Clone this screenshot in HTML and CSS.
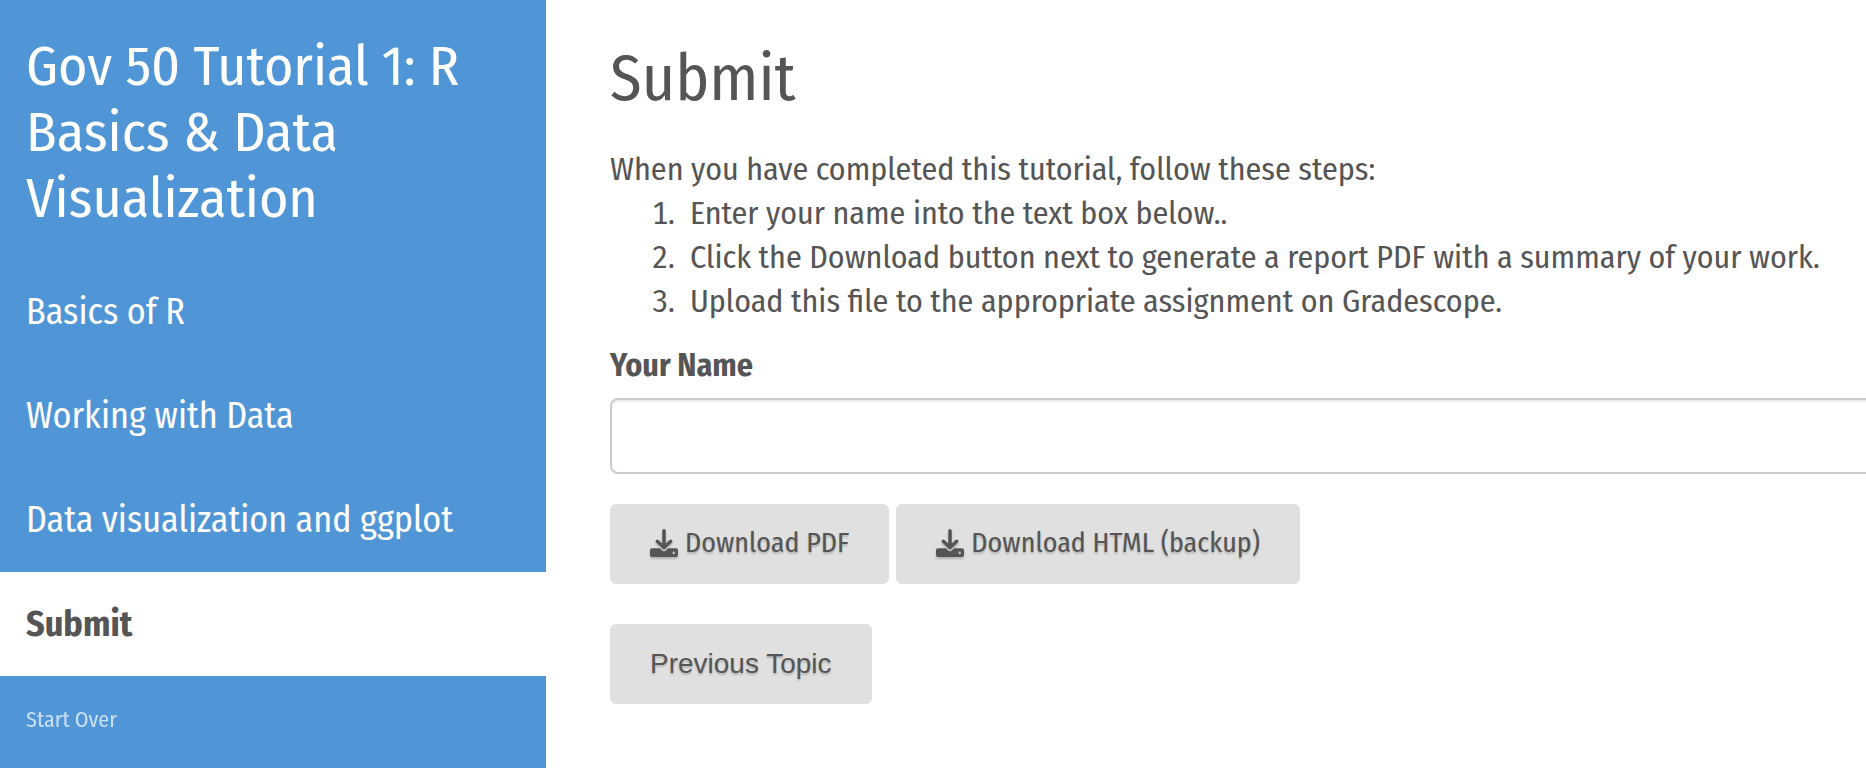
FILE: index.html
```html
<!DOCTYPE html>
<html lang="en">
<head>
<meta charset="utf-8">
<meta name="viewport" content="width=device-width, initial-scale=1">
<title>Gov 50 Tutorial 1: R Basics &amp; Data Visualization</title>
<link rel="stylesheet" href="styles.css">
</head>
<body>
<svg width="0" height="0" class="sprite" aria-hidden="true">
  <symbol id="download" viewBox="0 0 28 28">
    <path d="M14 1.800V17.500M7.300 12.300L14 18.600L20.700 12.300" fill="none" stroke="currentColor" stroke-width="3.500" stroke-linecap="round" stroke-linejoin="round"/>
    <path fill-rule="evenodd" d="M2 19.300H9.800L12.400 21.700Q14 23 15.600 21.700L18.200 19.300H26Q28 19.300 28 21.300V26Q28 28 26 28H2Q0 28 0 26V21.300Q0 19.300 2 19.300ZM23.700 22.600A1.300 1.300 0 1 0 23.700 25.200A1.300 1.300 0 1 0 23.700 22.600Z"/>
  </symbol>
</svg>
<div class="layout">
  <aside class="sidebar">
    <h2 class="sidebar-title">Gov 50 Tutorial 1: R Basics &amp; Data Visualization</h2>
    <nav class="topics">
      <a class="topic" href="#basics">Basics of R</a>
      <a class="topic" href="#data">Working with Data</a>
      <a class="topic" href="#ggplot">Data visualization and ggplot</a>
      <a class="topic current" href="#submit" aria-current="page">Submit</a>
    </nav>
    <a class="restart" href="#restart">Start Over</a>
  </aside>
  <main class="content" id="submit">
    <h1 class="heading">Submit</h1>
    <p class="intro">When you have completed this tutorial, follow these steps:</p>
    <ol class="steps">
      <li>Enter your name into the text box below..</li>
      <li>Click the Download button next to generate a report PDF with a summary of your work.</li>
      <li>Upload this file to the appropriate assignment on Gradescope.</li>
    </ol>
    <label class="label" for="name">Your Name</label>
    <input class="field" id="name" type="text">
    <div class="actions">
      <button class="button download" type="button"><svg class="icon" aria-hidden="true"><use href="#download"/></svg>Download PDF</button>
      <button class="button download" type="button"><svg class="icon" aria-hidden="true"><use href="#download"/></svg>Download HTML (backup)</button>
    </div>
    <button class="button previous" type="button">Previous Topic</button>
  </main>
</div>
</body>
</html>
```
FILE: styles.css
```css
@counter-style step {
  system: extends decimal;
  suffix: ".\00a0\00a0";
}

* {
  box-sizing: border-box;
}

body {
  margin: 0;
  overflow-x: hidden;
  background: #fff;
  color: #555;
  font-family: "Fira Sans Condensed", "Roboto Condensed", Lato, sans-serif;
  font-size: 32px;
  line-height: 44px;
}

.sprite {
  display: none;
}

.layout {
  display: flex;
  min-height: 100vh;
}

.sidebar {
  flex: 0 0 546px;
  padding: 34px 0 0;
  background: #5096d6;
  color: #fff;
}

.sidebar-title {
  margin: 0 26px 28px;
  font-size: 56px;
  font-weight: 400;
  line-height: 66px;
}

.topic {
  display: block;
  padding: 26px;
  color: inherit;
  font-size: 36px;
  line-height: 52px;
  text-decoration: none;
}

.topic.current {
  background: #fff;
  color: #555;
  font-weight: 700;
}

.restart {
  display: inline-block;
  padding: 28px 26px;
  color: #fff;
  font-size: 22px;
  line-height: 32px;
  text-decoration: none;
  opacity: 0.7;
}

.content {
  flex: 1 0 auto;
  margin-right: -64px;
  padding: 43px 0 44px 64px;
}

.heading {
  margin: 0 0 32px;
  font-size: 64px;
  font-weight: 400;
  line-height: 72px;
}

.intro {
  margin: 0;
}

.steps {
  margin: 0 0 20px;
  padding-left: 80px;
  list-style: step;
}

.label {
  display: block;
  margin-bottom: 11px;
  font-weight: 700;
}

.field {
  display: block;
  width: 100%;
  height: 76px;
  padding: 12px 24px;
  border: 2px solid #ccc;
  border-radius: 8px;
  background: #fff;
  box-shadow: inset 0 2px 2px rgba(0, 0, 0, 0.075);
  color: inherit;
  font: inherit;
}

.actions {
  display: flex;
  gap: 7px;
  margin: 30px 0 40px;
}

.button {
  display: inline-flex;
  align-items: center;
  height: 80px;
  padding: 0 40px;
  border: 0;
  border-radius: 6px;
  background: #e0e0e0;
  color: #555;
  font-size: 28px;
  line-height: 40px;
  text-shadow: 0 2px 2px rgba(0, 0, 0, 0.2);
}

.download {
  gap: 7px;
  padding-bottom: 2px;
  font-family: inherit;
}

.previous {
  font-family: "Liberation Sans", Arial, sans-serif;
}

.icon {
  width: 28px;
  height: 28px;
  fill: currentColor;
  filter: drop-shadow(0 2px 1px rgba(0, 0, 0, 0.2));
}
```
